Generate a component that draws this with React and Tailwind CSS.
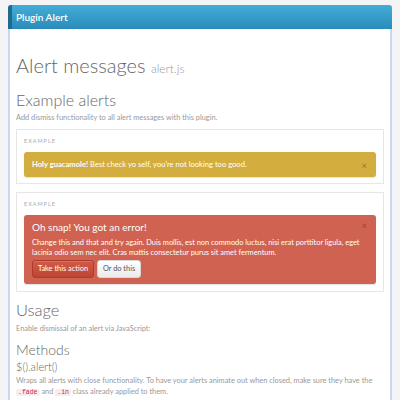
export default function App() {
  return (
    <div className="min-h-[400px] bg-[#f4f4f4] px-2 pt-[5px] font-[family-name:Lato,sans-serif]">
      <div className="min-h-[395px] rounded-t-[3px] border-x-2 border-[#c8d8ee] bg-white">
        <div className="-mx-[2px] flex h-6 items-center rounded-t-[3px] border-l-4 border-l-[#1e6b8e] bg-gradient-to-b from-[#43add8] to-[#2a8bb9] pl-1 text-[10px] font-semibold text-white">
          Plugin Alert
        </div>
        <div className="px-[6px] pt-6">
          <h1 className="text-[20px] font-light leading-6 text-[#666]">
            Alert messages <span className="text-[12px] text-[#999]">alert.js</span>
          </h1>
          <h2 className="mt-[9px] text-[16px] font-light leading-5 text-[#666]">Example alerts</h2>
          <p className="mt-[3px] text-[7.4px] leading-[10px] text-[#999]">Add dismiss functionality to all alert messages with this plugin.</p>

          <div className="mt-[6px] border border-[#e6e6e6] px-[7px] pb-[6px] pt-[7px]">
            <div className="text-[5.5px] leading-2 tracking-[1px] text-[#aaa]">EXAMPLE</div>
            <div className="mt-[7px] flex h-[25px] items-center rounded-[3px] bg-[#d3ad3e] px-[8px] text-[7.6px] text-white shadow-[0_1px_1px_rgba(0,0,0,0.12)]">
              <span className="font-bold">Holy guacamole!</span>&nbsp;Best check yo self, you're not looking too good.
              <span className="ml-auto mr-[1px] text-[10px] leading-none text-[#8f7d3e]">×</span>
            </div>
          </div>

          <div className="mt-[8px] border border-[#e6e6e6] px-[7px] pb-[7px] pt-[7px]">
            <div className="text-[5.5px] leading-2 tracking-[1px] text-[#aaa]">EXAMPLE</div>
            <div className="relative mt-[7px] rounded-[3px] bg-[#cf6251] px-[8px] pb-[6px] pt-[5px] text-white shadow-[0_1px_1px_rgba(0,0,0,0.12)]">
              <span className="absolute right-[9px] top-[5px] text-[10px] leading-none text-[#94483e]">×</span>
              <div className="text-[10px] leading-[14px]">Oh snap! You got an error!</div>
              <p className="mt-[4px] text-[7.4px] leading-[9.5px]">Change this and that and try again. Duis mollis, est non commodo luctus, nisi erat porttitor ligula, eget lacinia odio sem nec elit. Cras mattis consectetur purus sit amet fermentum.</p>
              <div className="mt-[3px] flex gap-[3px]">
                <button className="h-[18px] w-[62px] rounded-[3px] border border-[#ad3c2d] bg-gradient-to-b from-[#d05a48] to-[#bd4534] text-[7.4px] text-white shadow-[inset_0_1px_0_rgba(255,255,255,0.15)]">Take this action</button>
                <button className="h-[18px] w-[44px] rounded-[3px] border border-[#d8d8d8] bg-gradient-to-b from-white to-[#ebebeb] text-[7.4px] text-[#555]">Or do this</button>
              </div>
            </div>
          </div>

          <h2 className="mt-[8px] text-[16.5px] font-light leading-5 text-[#666]">Usage</h2>
          <p className="mt-[4px] text-[7.4px] leading-[10px] text-[#999]">Enable dismissal of an alert via JavaScript:</p>
          <h3 className="mt-[7px] text-[14px] font-light leading-[18px] text-[#666]">Methods</h3>
          <div className="mt-[1px] text-[11px] font-light leading-[14px] text-[#666]">$().alert()</div>
          <p className="mt-[1px] text-[7.4px] leading-[11px] text-[#999]">
            Wraps all alerts with close functionality. To have your alerts animate out when closed, make sure they have the{' '}
            <code className="rounded-[2px] bg-[#f9ecee] px-[2px] font-mono text-[6.5px] text-[#c7254e]">.fade</code> and{' '}
            <code className="rounded-[2px] bg-[#f9ecee] px-[2px] font-mono text-[6.5px] text-[#c7254e]">.in</code> class already applied to them.
          </p>
        </div>
      </div>
    </div>
  );
}
